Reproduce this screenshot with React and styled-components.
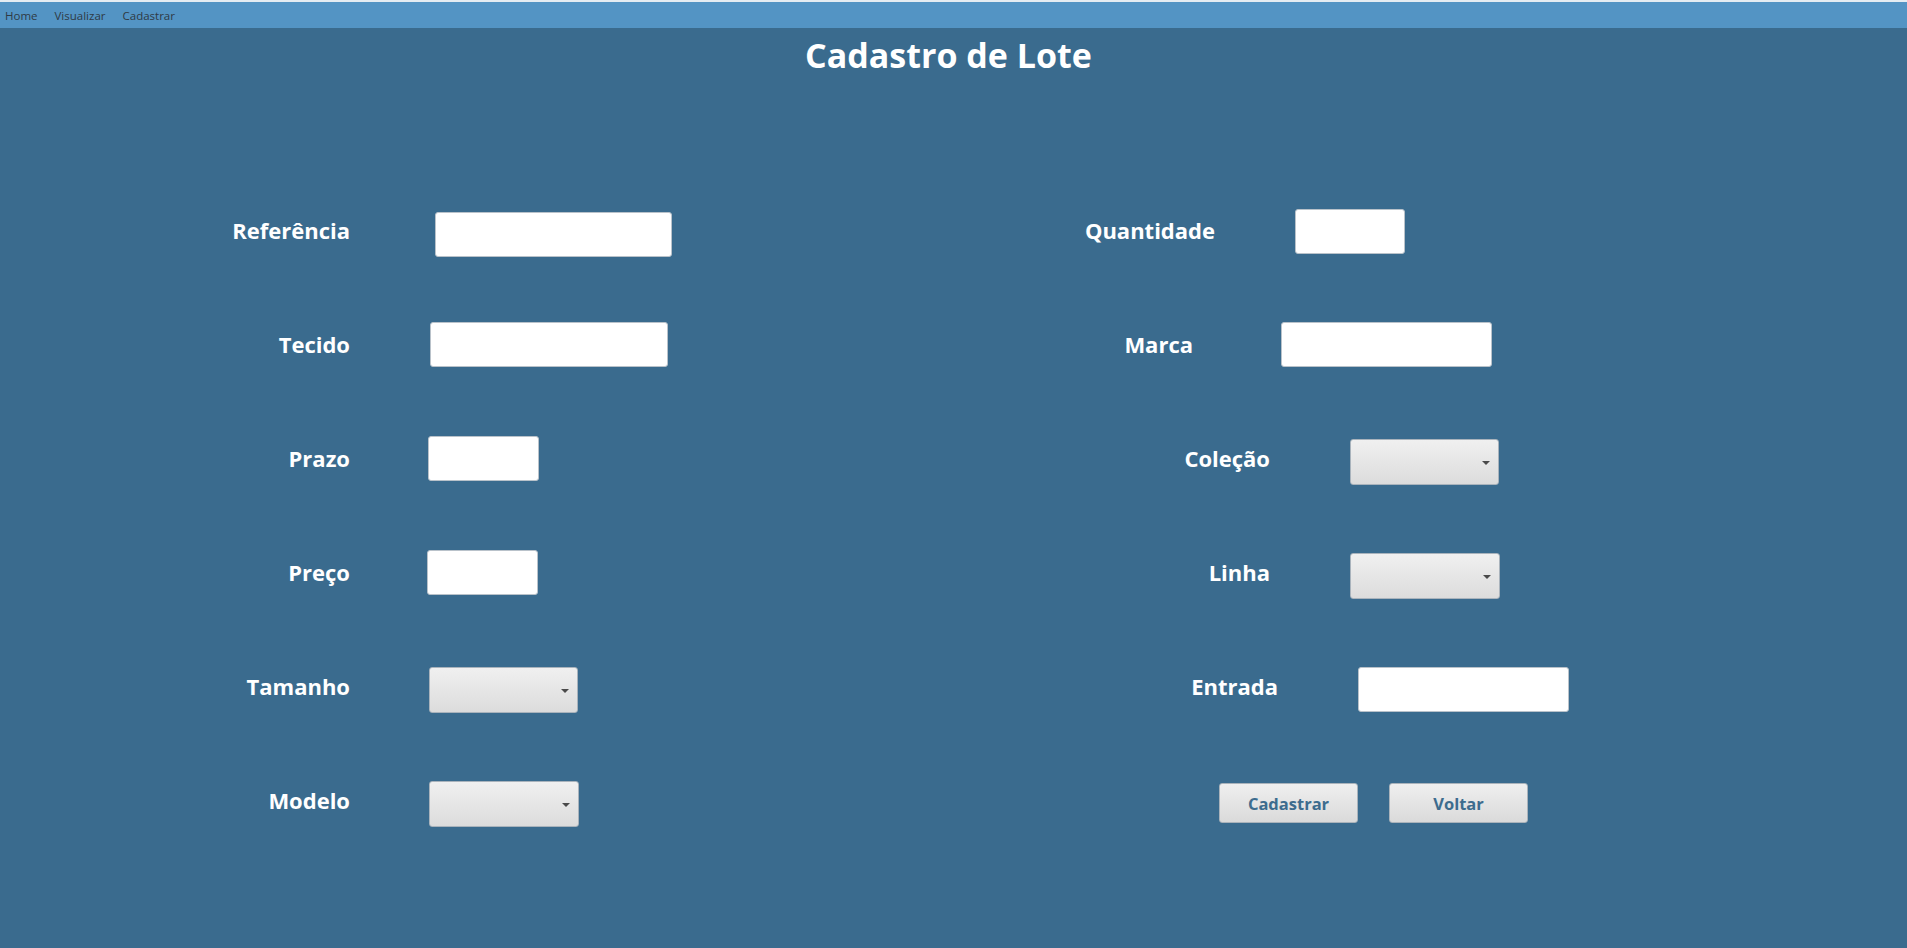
import React from "react";
import styled, { createGlobalStyle } from "styled-components";

const Global = createGlobalStyle`
	html, body {
		margin: 0;
		padding: 0;
		background: #3a6b8e;
		overflow: hidden;
	}
	* {
		box-sizing: border-box;
	}
`;

const leftFields = [
	{ label: "Referência", kind: "text", width: 237, shift: 5, drop: 9 },
	{ label: "Tecido", kind: "text", width: 238, shift: 0 },
	{ label: "Prazo", kind: "text", width: 111, shift: -2 },
	{ label: "Preço", kind: "text", width: 111, shift: -3, drop: 1 },
	{ label: "Tamanho", kind: "combo", width: 149, shift: -1 },
	{ label: "Modelo", kind: "combo", width: 150, shift: -1 }
];

const rightFields = [
	{ label: "Quantidade", kind: "text", width: 110, labelEnd: 265, gap: 80, drop: 2 },
	{ label: "Marca", kind: "text", width: 211, labelEnd: 243, gap: 88 },
	{ label: "Coleção", kind: "combo", width: 149, labelEnd: 320, gap: 80 },
	{ label: "Linha", kind: "combo", width: 150, labelEnd: 320, gap: 80 },
	{ label: "Entrada", kind: "text", width: 211, labelEnd: 328, gap: 80, drop: 7 }
];

const Field = ({ kind, width, shift = 0, drop = 0 }) =>
	kind === "combo" ? (
		<Combo $width={width} $shift={shift}>
			<Arrow />
		</Combo>
	) : (
		<TextBox $width={width} $shift={shift} $drop={drop} />
	);

const App = () => {
	return (
		<Page>
			<Global />
			<MenuBar>
				<MenuItem>Home</MenuItem>
				<MenuItem>Visualizar</MenuItem>
				<MenuItem>Cadastrar</MenuItem>
			</MenuBar>
			<Title>Cadastro de Lote</Title>
			<Form>
				{leftFields.map((left, i) => {
					const right = rightFields[i];
					return (
						<Row key={left.label}>
							<LeftCell>
								<Label>{left.label}</Label>
								<Field {...left} />
							</LeftCell>
							{right ? (
								<RightCell $gap={right.gap}>
									<Label style={{ width: right.labelEnd }}>{right.label}</Label>
									<Field {...right} />
								</RightCell>
							) : (
								<Actions>
									<Button>Cadastrar</Button>
									<Button>Voltar</Button>
								</Actions>
							)}
						</Row>
					);
				})}
			</Form>
		</Page>
	);
};

const Page = styled.div`
	width: 1907px;
	height: 948px;
	background: #3a6b8e;
	font-family: "Open Sans", "Noto Sans", sans-serif;
`;

const MenuBar = styled.div`
	display: flex;
	align-items: center;
	gap: 17px;
	height: 28px;
	padding-left: 5px;
	border-top: 2px solid #e4ecf2;
	background: #5394c4;
`;

const MenuItem = styled.span`
	font-size: 11.5px;
	color: #2f3a44;
	cursor: default;
`;

const Title = styled.h1`
	margin: 0;
	padding: 7px 10px 0 0;
	line-height: 40px;
	text-align: center;
	font-size: 34px;
	font-weight: 700;
	color: #ffffff;
`;

const Form = styled.div`
	display: grid;
	grid-auto-rows: 114px;
	margin-top: 98px;
`;

const Row = styled.div`
	display: flex;
	align-items: center;
`;

const LeftCell = styled.div`
	width: 950px;
	display: grid;
	grid-template-columns: 350px auto;
	column-gap: 80px;
	align-items: center;
	justify-content: start;
`;

const RightCell = styled.div`
	display: flex;
	align-items: center;
	gap: ${(p) => p.$gap}px;
`;

const Label = styled.label`
	text-align: right;
	font-size: 22px;
	font-weight: 700;
	color: #ffffff;
	white-space: nowrap;
`;

const TextBox = styled.div`
	width: ${(p) => p.$width}px;
	height: 45px;
	margin: ${(p) => p.$drop}px 0 0 ${(p) => p.$shift}px;
	background: #ffffff;
	border: 1px solid #b9c2ca;
	border-radius: 3px;
`;

const Combo = styled.div`
	position: relative;
	width: ${(p) => p.$width}px;
	height: 46px;
	margin: 8px 0 0 ${(p) => p.$shift}px;
	background: linear-gradient(#f0f0f0, #dcdcdc);
	border: 1px solid #a9b3bc;
	border-radius: 3px;
`;

const Arrow = styled.span`
	position: absolute;
	right: 8px;
	top: 50%;
	margin-top: -1px;
	border-left: 4px solid transparent;
	border-right: 4px solid transparent;
	border-top: 4px solid #4a4a4a;
`;

const Actions = styled.div`
	display: flex;
	gap: 31px;
	padding-left: 269px;
`;

const Button = styled.button`
	width: 139px;
	height: 40px;
	margin-top: 6px;
	padding: 0;
	background: linear-gradient(#efefef, #dadada);
	border: 1px solid #aab3bb;
	border-radius: 3px;
	font-family: "Open Sans", "Noto Sans", sans-serif;
	font-size: 16.5px;
	font-weight: 700;
	color: #3d6c8e;
`;

export default App;
